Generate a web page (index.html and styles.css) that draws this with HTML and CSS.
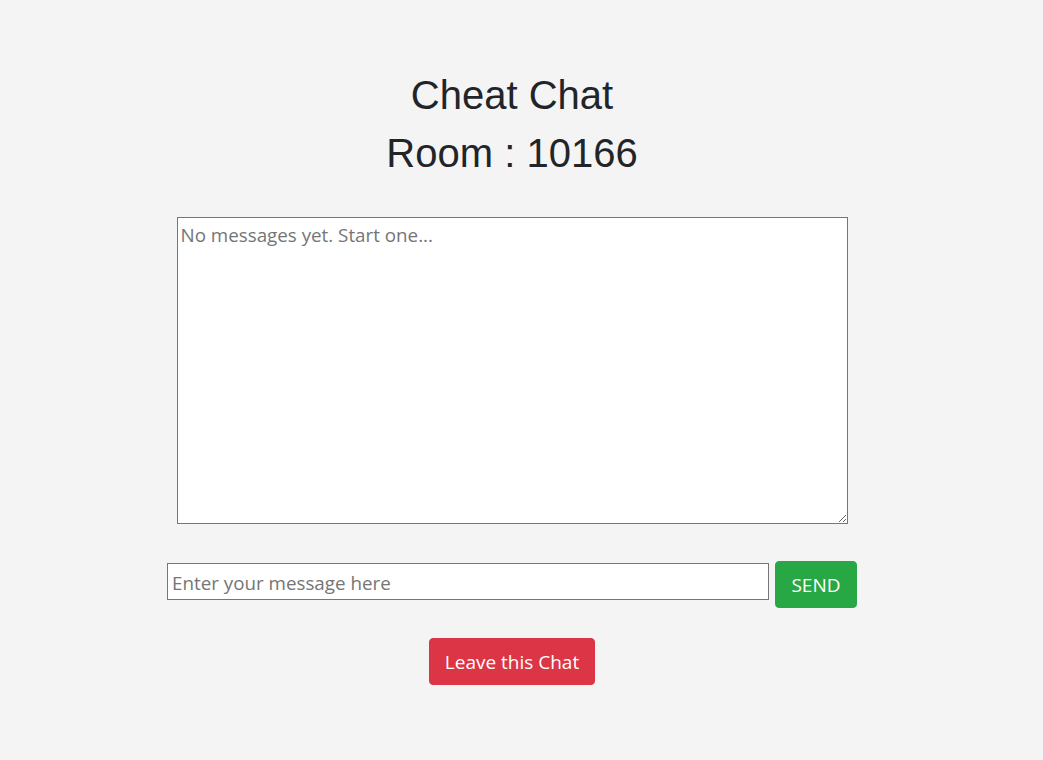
FILE: index.html
```html
<!DOCTYPE html>
<html>
<head>
<meta charset="utf-8">
<link rel="stylesheet" href="styles.css">
</head>
<body>
<main class="page">
  <h1 class="title">Cheat Chat</h1>
  <h1 class="title room">Room : 10166</h1>
  <textarea class="messages" placeholder="No messages yet. Start one..."></textarea>
  <div class="compose">
    <input class="msg-input" type="text" placeholder="Enter your message here">
    <button class="btn btn-send">SEND</button>
  </div>
  <button class="btn btn-leave">Leave this Chat</button>
</main>
</body>
</html>
```
FILE: styles.css
```css
html, body {
  margin: 0;
  padding: 0;
  background: #f4f4f4;
}
body {
  font-family: "Open Sans", "Noto Sans", sans-serif;
  color: #212529;
}
.page {
  width: 1024px;
  display: flex;
  flex-direction: column;
  align-items: center;
  padding-top: 71px;
}
.title {
  font-family: "Liberation Sans", Arial, sans-serif;
  font-weight: 400;
  font-size: 40px;
  line-height: 48px;
  margin: 0;
}
.room {
  margin-top: 10px;
}
.messages {
  margin-top: 40px;
  width: 671px;
  height: 307px;
  box-sizing: border-box;
  border: 1px solid #767676;
  background: #fff;
  padding: 4px 3px 2px;
  font-family: "Open Sans", "Noto Sans", sans-serif;
  font-size: 18.8px;
  line-height: 1.4;
  resize: both;
}
.messages::placeholder,
.msg-input::placeholder {
  color: #757575;
}
.compose {
  margin-top: 37px;
  display: flex;
  align-items: flex-start;
  gap: 6px;
}
.msg-input {
  margin-top: 2px;
  width: 602px;
  height: 37px;
  box-sizing: border-box;
  border: 1px solid #767676;
  background: #fff;
  padding: 2px 4px 0;
  font-family: "Open Sans", "Noto Sans", sans-serif;
  font-size: 18.8px;
}
.btn {
  font-family: "Open Sans", "Noto Sans", sans-serif;
  font-size: 19px;
  color: #fff;
  border: 1px solid transparent;
  border-radius: 4px;
  height: 47px;
  padding: 0;
  white-space: nowrap;
  box-sizing: border-box;
  cursor: pointer;
}
.btn-send {
  background: #28a745;
  border-color: #28a745;
  width: 82px;
}
.btn-leave {
  margin-top: 30px;
  background: #dc3545;
  border-color: #dc3545;
  width: 166px;
}
```
